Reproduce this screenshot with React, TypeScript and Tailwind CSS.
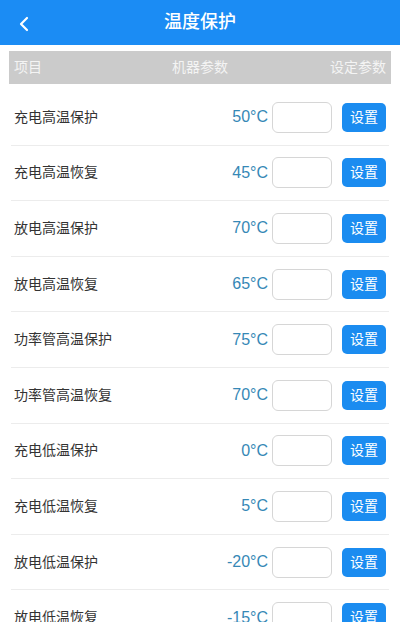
import React from "react";

const rows: [string, string][] = [
  ["充电高温保护", "50°C"],
  ["充电高温恢复", "45°C"],
  ["放电高温保护", "70°C"],
  ["放电高温恢复", "65°C"],
  ["功率管高温保护", "75°C"],
  ["功率管高温恢复", "70°C"],
  ["充电低温保护", "0°C"],
  ["充电低温恢复", "5°C"],
  ["放电低温保护", "-20°C"],
  ["放电低温恢复", "-15°C"],
];

const cjk = { fontFamily: '"Liberation Sans", "Noto Sans CJK SC", sans-serif' };

export default function App() {
  return (
    <div className="w-[400px] h-[622px] overflow-hidden bg-white" style={cjk}>
      <div className="h-[45px] bg-[#1b8cf4] flex items-center relative">
        <svg className="absolute left-[17px] top-[16px]" width="14" height="16" viewBox="0 0 14 16">
          <path d="M10 2 L4 8 L10 14" fill="none" stroke="white" strokeWidth="2.2" strokeLinecap="round" strokeLinejoin="round" />
        </svg>
        <div className="flex-1 text-center text-white text-[18px] font-medium">温度保护</div>
      </div>
      <div className="px-[9px] pt-[6px]">
        <div className="h-[33px] bg-[#cbcbcb] flex items-center justify-between px-[5px] text-[14px] text-[#f4f4f4]">
          <span className="w-[100px]">项目</span>
          <span>机器参数</span>
          <span className="w-[100px] text-right">设定参数</span>
        </div>
        <div className="pt-[6px] px-[2px]">
          {rows.map(([label, val]) => (
            <div key={label} className="h-[55.6px] border-b border-[#ececec] flex items-center">
              <span className="flex-1 pl-[3px] text-[14px] text-[#333333]">{label}</span>
              <span className="text-[16px] text-[#3688b6] mr-[4px]">{val}</span>
              <div className="w-[60px] h-[31px] border border-[#d6d6d6] rounded-[6px] bg-white" />
              <div className="ml-[10px] mr-[3px] w-[44px] h-[29px] rounded-[5px] bg-[#1b8cf0] flex items-center justify-center text-white text-[14px]">
                设置
              </div>
            </div>
          ))}
        </div>
      </div>
    </div>
  );
}
